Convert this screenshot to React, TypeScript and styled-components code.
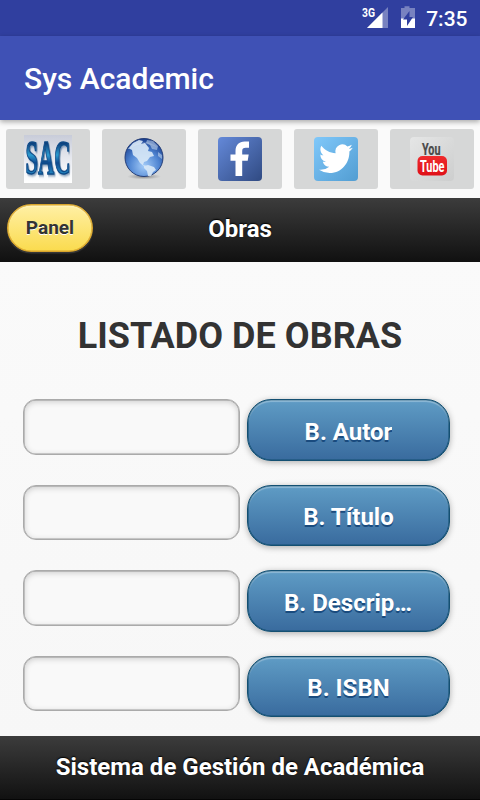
import React from 'react';
import styled, { createGlobalStyle } from 'styled-components';

const GlobalStyle = createGlobalStyle`
  *, *::before, *::after { box-sizing: border-box; }
  html, body { margin: 0; padding: 0; }
  body { font-family: Roboto, "Liberation Sans", sans-serif; background: #fafafa; }
`;

const Screen = styled.div`
  width: 480px;
  height: 800px;
  overflow: hidden;
  display: flex;
  flex-direction: column;
  background: linear-gradient(#fafafa 250px, #f7f7f7 740px);
`;

const StatusBar = styled.div`
  height: 36px;
  flex: none;
  display: flex;
  justify-content: flex-end;
  align-items: center;
  padding: 1px 12.5px 0 0;
  background: #303f9f;
  color: #fff;
`;

const StatusIcons = styled.svg`
  display: block;
  margin: -2px 10px 0 0;
`;

const Clock = styled.span`
  font-size: 21px;
  font-weight: 500;
  line-height: 36px;
`;

const AppBar = styled.header`
  height: 84px;
  flex: none;
  display: flex;
  align-items: center;
  padding: 2px 24px 0;
  background: #3f51b5;
  box-shadow: 0 2px 5px rgba(0, 0, 0, 0.32);
  z-index: 1;
`;

const AppTitle = styled.h1`
  margin: 0;
  color: #fff;
  font-size: 30px;
  font-weight: 500;
  line-height: 40px;
`;

const LinkBar = styled.nav`
  height: 78px;
  flex: none;
  display: flex;
  gap: 12px;
  padding: 9px 6px;
`;

const LinkButton = styled.button`
  width: 84px;
  height: 60px;
  padding: 0;
  border: 0;
  border-radius: 3px;
  background: #d6d7d7;
  display: flex;
  align-items: center;
  justify-content: center;

  svg { display: block; }
`;

const PageHeader = styled.div`
  height: 64px;
  flex: none;
  display: grid;
  grid-template-columns: 93px 1fr 93px;
  align-items: center;
  background: linear-gradient(#3c3c3c, #111);
  border-bottom: 1px solid #111;
`;

const PanelButton = styled.button`
  width: 86px;
  height: 48px;
  margin: -4px 0 0 7px;
  padding: 0;
  border: 1px solid #d9a52c;
  border-radius: 24px;
  background: linear-gradient(#fff0a5, #fadb4e);
  box-shadow: inset 0 0 0 0.6px #d9a52c, inset 0 2px 1px rgba(255, 255, 255, 0.25), 0 1.5px 1px rgba(255, 255, 255, 0.15);
  color: #333;
  font: 700 19px/46px Roboto, sans-serif;
  text-shadow: 0 1px 0 #fff;
`;

const BarTitle = styled.h2`
  margin: 0;
  color: #fff;
  text-align: center;
  font-size: 24px;
  font-weight: 700;
  line-height: 32px;
  padding-bottom: 1px;
  text-shadow: 0 -1.5px 1.5px #000;
`;

const Content = styled.main`
  flex: 1;
  min-height: 0;
  padding: 51px 30px 0 23px;
`;

const Heading = styled.h2`
  width: 434px;
  margin: 0 0 39.5px;
  height: 46.5px;
  color: #333;
  text-align: center;
  font-size: 36px;
  font-weight: 700;
  line-height: 47px;
  letter-spacing: 0.05px;
  text-shadow: 0 1.5px 0 #fff;
  white-space: nowrap;
`;

const SearchRow = styled.div`
  display: grid;
  grid-template-columns: 217px 203px;
  column-gap: 7px;
  align-items: start;
  height: 85.5px;
`;

const SearchInput = styled.input`
  width: 217px;
  height: 55.5px;
  padding: 0 12px;
  border: 1px solid #aaa;
  border-radius: 13px;
  background: #f9f9f9;
  outline: none;
  box-shadow: inset 0 1.5px 6px rgba(0, 0, 0, 0.2), inset 0 0 0 0.5px #aaa;
`;

const SearchButton = styled.button`
  width: 203px;
  height: 61.5px;
  padding: 0 36px;
  border: 1px solid #145072;
  border-radius: 24px;
  background: linear-gradient(#5f9cc5, #396b9e);
  box-shadow: inset 0 2px 1px rgba(255, 255, 255, 0.3), inset 0 0 0 0.6px #145072, 0 1.5px 6px rgba(0, 0, 0, 0.3);
  color: #fff;
  font: 700 24px/62px Roboto, sans-serif;
  text-shadow: 0 1.5px 0 #194b7e;
  display: flex;
  align-items: center;
  justify-content: center;
`;

const ButtonLabel = styled.span`
  line-height: 32px;
  padding: 4px 0 0;
  overflow: hidden;
  text-overflow: ellipsis;
  white-space: nowrap;
`;

const Footer = styled.footer`
  height: 64px;
  flex: none;
  display: flex;
  align-items: center;
  justify-content: center;
  background: linear-gradient(#3c3c3c, #111);
  border-bottom: 1px solid #050505;
  padding-bottom: 1px;
`;

const SacText = styled.text`
  filter: drop-shadow(1px 1px 0.7px rgba(70, 110, 150, 0.7));
`;

const SacIcon = () => (
  <svg width="48" height="48" viewBox="0 0 48 48">
    <defs>
      <linearGradient id="sacBg" x2="0" y2="1">
        <stop stopColor="#c8ccd9" />
        <stop offset=".7" stopColor="#f3f4f8" />
        <stop offset="1" stopColor="#fff" />
      </linearGradient>
      <linearGradient id="sacText" x2="0" y2="1">
        <stop offset=".2" stopColor="#0a3370" />
        <stop offset=".45" stopColor="#2c9cd0" />
        <stop offset=".6" stopColor="#0f4a90" />
        <stop offset=".8" stopColor="#2386c0" />
      </linearGradient>
    </defs>
    <rect width="48" height="48" fill="url(#sacBg)" />
    <g fontFamily="Liberation Serif, serif" fontWeight="700" fontSize="32" transform="translate(1.5 38.5) scale(1 1.5)">
      <SacText textLength="45" lengthAdjust="spacingAndGlyphs" fill="url(#sacText)" stroke="#0e4a87" strokeWidth="1">SAC</SacText>
    </g>
  </svg>
);

const GlobeIcon = () => (
  <svg width="48" height="48" viewBox="0 0 48 48">
    <defs>
      <radialGradient id="sea" cx=".5" cy=".72" r=".72">
        <stop stopColor="#a3cbf8" />
        <stop offset=".55" stopColor="#4f85d2" />
        <stop offset="1" stopColor="#173c8d" />
      </radialGradient>
      <radialGradient id="globeShade">
        <stop stopColor="#555" stopOpacity=".7" />
        <stop offset="1" stopColor="#777" stopOpacity="0" />
      </radialGradient>
    </defs>
    <ellipse cx="24" cy="41.5" rx="17" ry="3" fill="url(#globeShade)" />
    <circle cx="24" cy="22.5" r="19" fill="url(#sea)" stroke="#263f78" />
    <g fill="#d9e9f8" opacity=".9">
      <path d="M8 14l5-6 6-3 4 1-2 3 4-1 4 5-1 3 4 1 2 4-4 1-3 4-3 1-1 3 3 1 2 2-3-1-5-4-3-5-4-3-1-5-4-2z" />
      <path d="M24 31l4-1 6 2 2 3-3 2-2 4h-3l-1-5-3-3z" />
      <path d="M27 5l6 1 5 5-1 4-5-1-2-4-4-2zM38 17l4 3v4l-4-3z" opacity=".55" />
    </g>
    <path d="M9 14a18 16 0 0 1 29-1c-9-5-19-6-29 1z" fill="#fff" opacity=".15" />
  </svg>
);

const FacebookIcon = () => (
  <svg width="48" height="48" viewBox="0 0 48 48">
    <defs>
      <linearGradient id="fb" x2="1" y2="1">
        <stop stopColor="#6489d9" />
        <stop offset="1" stopColor="#304a82" />
      </linearGradient>
    </defs>
    <rect x="2" y="2" width="44" height="44" rx="4" fill="url(#fb)" />
    <path d="M19.500 41V25.700H14.500V19.500h5v-3.200c0-6.300 3.500-9.800 9.200-9.800H33v6.200h-3.300c-2.500 0-3.500 1-3.500 3.300v3.500h6.500l-1 6.200h-5.500V41z" fill="#fff" />
  </svg>
);

const TwitterIcon = () => (
  <svg width="48" height="48" viewBox="0 0 48 48">
    <defs>
      <linearGradient id="tw" x2="1" y2="1">
        <stop stopColor="#80c8fa" />
        <stop offset="1" stopColor="#529dd2" />
      </linearGradient>
    </defs>
    <rect x="2" y="2" width="44" height="44" rx="4" fill="url(#tw)" />
    <path
      transform="translate(7 6) scale(1.41 1.47)"
      d="M23.950 4.570a10 10 0 0 1-2.820.770 4.960 4.960 0 0 0 2.160-2.720c-.950.550-2 .950-3.130 1.180a4.920 4.920 0 0 0-8.380 4.480C7.690 8.090 4.070 6.130 1.640 3.160a4.820 4.820 0 0 0-.660 2.470c0 1.710.870 3.210 2.190 4.100a4.900 4.900 0 0 1-2.230-.620v.060a4.920 4.920 0 0 0 3.950 4.830 5 5 0 0 1-2.210.080 4.940 4.940 0 0 0 4.600 3.420A9.870 9.870 0 0 1 0 19.540a13.990 13.990 0 0 0 7.550 2.210c9.050 0 14-7.500 14-13.990 0-.210 0-.420-.020-.630a9.940 9.940 0 0 0 2.420-2.560z"
      fill="#fff"
    />
  </svg>
);

const YoutubeIcon = () => (
  <svg width="48" height="48" viewBox="0 0 48 48">
    <defs>
      <linearGradient id="yt" x2="1" y2="1">
        <stop stopColor="#e5e6e6" />
        <stop offset="1" stopColor="#cdcece" />
      </linearGradient>
      <linearGradient id="ytRed" x2="0" y2="1">
        <stop stopColor="#ef2b2d" />
        <stop offset="1" stopColor="#df1018" />
      </linearGradient>
    </defs>
    <rect x="2" y="2" width="44" height="44" rx="4" fill="url(#yt)" />
    <rect x="9.500" y="21" width="29.500" height="19.500" rx="5" fill="url(#ytRed)" />
    <g fontFamily="Roboto, sans-serif" fontWeight="700">
      <text fontSize="14" transform="translate(14 19.500) scale(1 1.220)" textLength="18.500" lengthAdjust="spacingAndGlyphs" fill="#4a4a4a" stroke="#4a4a4a" strokeWidth=".2">You</text>
      <text fontSize="14" transform="translate(12 37) scale(1 1.220)" textLength="24.500" lengthAdjust="spacingAndGlyphs" fill="#fff">Tube</text>
    </g>
  </svg>
);

const links = [
  { label: 'SAC', Icon: SacIcon },
  { label: 'Web', Icon: GlobeIcon },
  { label: 'Facebook', Icon: FacebookIcon },
  { label: 'Twitter', Icon: TwitterIcon },
  { label: 'YouTube', Icon: YoutubeIcon },
];

const searches = ['B. Autor', 'B. Título', 'B. Descripción', 'B. ISBN'];

export default function App() {
  return (
    <>
      <GlobalStyle />
      <Screen>
        <StatusBar>
          <StatusIcons width="56" height="28" viewBox="0 0 56 28">
            <text x="2" y="13" fontSize="12" fontWeight="700" fontFamily="Roboto, sans-serif" fill="#fff" textLength="13" lengthAdjust="spacingAndGlyphs">3G</text>
            <path d="M28 3v21H7z" fill="#fff" opacity=".35" />
            <path d="M22.500 8.500V24H7z" fill="#fff" />
            <path d="M41 4h3.500V2.200h5V4H55v20H41z" fill="#fff" opacity=".35" />
            <path d="M41 14.500h14V24H41z" fill="#fff" />
            <path d="M49.500 7v6h3.500L47 22v-6.500h-4z" fill="#303f9f" />
          </StatusIcons>
          <Clock>7:35</Clock>
        </StatusBar>
        <AppBar>
          <AppTitle>Sys Academic</AppTitle>
        </AppBar>
        <LinkBar>
          {links.map(({ label, Icon }) => (
            <LinkButton key={label} aria-label={label}>
              <Icon />
            </LinkButton>
          ))}
        </LinkBar>
        <PageHeader>
          <PanelButton>Panel</PanelButton>
          <BarTitle>Obras</BarTitle>
        </PageHeader>
        <Content>
          <Heading>LISTADO DE OBRAS</Heading>
          {searches.map((label) => (
            <SearchRow key={label}>
              <SearchInput aria-label={label} />
              <SearchButton>
                <ButtonLabel>{label}</ButtonLabel>
              </SearchButton>
            </SearchRow>
          ))}
        </Content>
        <Footer>
          <BarTitle as="h4">Sistema de Gestión de Académica</BarTitle>
        </Footer>
      </Screen>
    </>
  );
}
